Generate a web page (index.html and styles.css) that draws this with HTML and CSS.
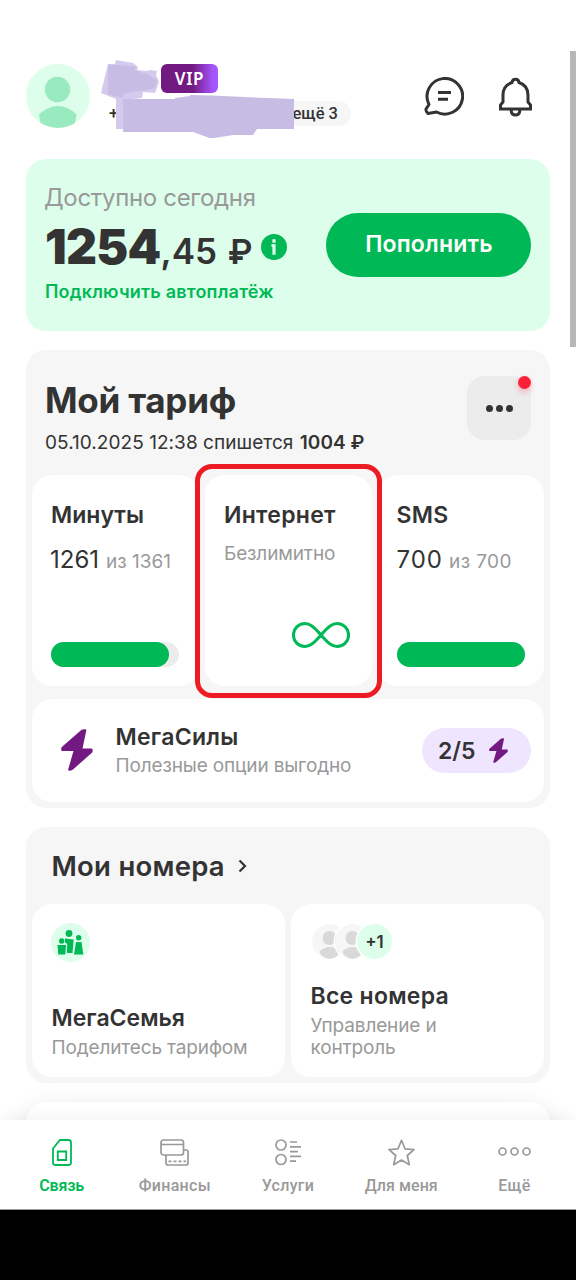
FILE: index.html
```
<!DOCTYPE html>
<html lang="ru">
<head>
<meta charset="utf-8">
<title>Мой тариф</title>
<link rel="stylesheet" href="styles.css">
</head>
<body>
<div class="screen">
  <main class="content">
    <header class="header">
      <svg class="avatar" width="64" height="64" viewBox="0 0 64 64"><clipPath id="av"><circle cx="32" cy="32" r="32"/></clipPath><circle cx="32" cy="32" r="32" fill="#dcfeea"/><g fill="#99eabf" clip-path="url(#av)"><circle cx="31.500" cy="25.500" r="12.700"/><path d="M13 50.500Q22 42 32 42T50.500 50.500L48 64H15.500Z"/></g></svg>
      <div class="profile">
        <span class="vip">VIP</span>
        <div class="phone-row"><span class="phone">+7</span><span class="more-chip">ещё 3</span></div>
        <svg class="scribble" width="196" height="80" viewBox="100 58 196 80"><path fill="#d3caed" d="M108 64H115L116 60 133 63 138 67 137 70 147 71 150 70 157 71 156 75 159 82 155 93 143 92 142 98 122 100 123 102H116V99L101 93Z"/><path fill="#c6bce4" d="M108 65H119L136 67 134 70 149 75 153 78 157 80 155 87 149 90 135 91 123 94 122 98 108 94Z"/><path fill="#d3caed" d="M116 99H124V129H116Z"/><path fill="#c6bce4" d="M123 99H175V98L190 96V95L212 95.500 268 98 294 99V129H257L253 135H233L211 138.500 193 132H123Z"/></svg>
      </div>
      <svg class="chat" width="40" height="40" viewBox="0 0 40 40" fill="none" stroke="#333" stroke-width="3"><path d="M4.800 27A17.800 17.800 0 1 1 12.500 35L4 36.500Q1.500 34.500 2 32L5 27.500Z" stroke-linejoin="round"/><path d="M14 15.500H27M14 22.300H24"/></svg>
      <svg class="bell" width="33" height="41" viewBox="0 0 33 41" fill="none" stroke="#333" stroke-width="3"><path d="M13 5.500Q13.500 2.300 16.500 2.300T20 5.500C26 7.500 29 12 29 18V25L31.500 28V32H1.500V28L4 25V18C4 12 7 7.500 13 5.500Z"/><path d="M12.300 32V34.500Q12.800 38 16.500 38T20.700 34.500V32"/></svg>
    </header>

    <section class="balance">
      <div>
        <div class="balance-label">Доступно сегодня</div>
        <div class="amount"><span class="rub">1254</span><span class="kop">,45</span><span class="cur">₽</span><svg width="26" height="26" viewBox="0 0 26 26"><circle cx="13" cy="13" r="13" fill="#00b956"/><path d="M13 5.300v3.400M10.500 11.500H13M13 10.300v10.500" stroke="#dcfeea" stroke-width="3.200"/></svg></div>
        <div class="autopay">Подключить автоплатёж</div>
      </div>
      <button class="topup">Пополнить</button>
    </section>

    <section class="panel tariff">
      <div class="tariff-head">
        <div>
          <h1>Мой тариф</h1>
          <p class="charge">05.10.2025 12:38 спишется <b>1004 ₽</b></p>
        </div>
        <div class="dots"><i></i><i></i><i></i><span class="alert"></span></div>
      </div>
      <div class="limits">
        <div class="card limit">
          <h2>Минуты</h2>
          <div class="value"><span class="left minutes">1261</span><span class="total">из 1361</span></div>
          <div class="bar"><div class="fill" style="width:92.300%"></div></div>
        </div>
        <div class="card limit">
          <h2 class="wide">Интернет</h2>
          <div class="unlimited">Безлимитно</div>
          <svg class="infinity" width="58" height="26" viewBox="0 0 58 26" fill="none" stroke="#00b956" stroke-width="3"><path d="M29 13C22 5 18 1.500 12.900 1.500a11.500 11.500 0 0 0 0 23C18 24.500 22 21 29 13S40 1.500 45.100 1.500a11.500 11.500 0 0 1 0 23C40 24.500 36 21 29 13Z"/></svg>
          <span class="highlight"></span>
        </div>
        <div class="card limit">
          <h2 class="wide">SMS</h2>
          <div class="value"><span class="left sms">700</span><span class="total spaced">из 700</span></div>
          <div class="bar"><div class="fill" style="width:100%"></div></div>
        </div>
      </div>
      <div class="card powers">
        <svg class="bolt" width="32" height="42" viewBox="0 0 32 42"><path fill="#731982" d="M24.500.300Q25.500.300 25.300 1.500L21.500 19.500H31Q32.200 21 31.200 23.500L12 40.500Q10.500 42 7.500 41.500 7 41 7.300 40L12.500 22H.800Q-.500 20.500.800 18L20 1.300Q21.500 0 24.500.300Z"/></svg>
        <div class="powers-text"><h2 class="wide">МегаСилы</h2><p>Полезные опции выгодно</p></div>
        <div class="counter">2/5<svg width="19" height="25" viewBox="0 0 32 42"><path fill="#731982" d="M24.500.300Q25.500.300 25.300 1.500L21.500 19.500H31Q32.200 21 31.200 23.500L12 40.500Q10.500 42 7.500 41.500 7 41 7.300 40L12.500 22H.800Q-.500 20.500.800 18L20 1.300Q21.500 0 24.500.300Z"/></svg></div>
      </div>
    </section>

    <section class="panel numbers">
      <div class="numbers-head"><h3>Мои номера</h3><svg width="9" height="14" viewBox="0 0 9 14" fill="none" stroke="#333" stroke-width="2.200"><path d="M1.500 1.500 7 7 1.500 12.500"/></svg></div>
      <div class="number-cards">
        <div class="card number">
          <svg class="family" width="39" height="39" viewBox="0 0 39 39"><circle cx="19.500" cy="19.500" r="19.500" fill="#dcfeea"/><g fill="#00b956"><circle cx="18" cy="10.500" r="3.400"/><circle cx="10.700" cy="18" r="2.700"/><circle cx="27.700" cy="14.700" r="2.700"/><path d="M14 15.500 22.700 16.500 21.500 30H15.800L16.300 21 14 19.500ZM6.500 22H15L14.300 31.500H7.300ZM25 19H30.500L32.300 31.500H23Z"/></g></svg>
          <h2>МегаСемья</h2>
          <p>Поделитесь тарифом</p>
        </div>
        <div class="card number">
          <div class="people">
            <svg width="35" height="35" viewBox="0 0 35 35"><circle cx="17.500" cy="17.500" r="17.500" fill="#f6f6f6"/><path fill="#d9d9d9" d="M7.500 27.500Q12 23 17.500 23T27.500 27.500Q27 33 17.500 35 9 33.500 7.500 27.500Z"/><circle cx="17.500" cy="14" r="7" fill="#d9d9d9"/></svg>
            <svg width="35" height="35" viewBox="0 0 35 35"><circle cx="17.500" cy="17.500" r="17.500" fill="#f6f6f6"/><path fill="#d9d9d9" d="M7.500 27.500Q12 23 17.500 23T27.500 27.500Q27 33 17.500 35 9 33.500 7.500 27.500Z"/><circle cx="17.500" cy="14" r="7" fill="#d9d9d9"/></svg>
            <span class="plus">+1</span>
          </div>
          <h2 class="wide">Все номера</h2>
          <p>Управление и<br>контроль</p>
        </div>
      </div>
    </section>

    <section class="next-card"></section>
    <span class="scrollbar"></span>
  </main>

  <nav class="nav">
    <a class="tab active"><svg width="20" height="27" viewBox="0 0 20 27" fill="none" stroke="#00b956" stroke-width="1.800"><path d="M8 1H16.500Q19 1 19 3.500V23.500Q19 26 16.500 26H3.500Q1 26 1 23.500V9.500Z"/><path d="M5.800 12.500H14.200V21H5.800Z"/></svg><span>Связь</span></a>
    <a class="tab"><svg width="29" height="27" viewBox="0 0 29 27" fill="none" stroke="#999" stroke-width="1.700"><rect x="1" y="1" width="22.500" height="15" rx="2.500"/><path d="M1 5.500H23.500M23.500 11H26Q28 11 28 13V24Q28 26 26 26H8Q6 26 6 24V16"/><path d="M8.500 22.300H26" stroke-dasharray="3 2"/></svg><span>Финансы</span></a>
    <a class="tab"><svg width="27" height="27" viewBox="0 0 27 27" fill="none" stroke="#999" stroke-width="1.700"><circle cx="6" cy="6" r="5"/><circle cx="6" cy="20.500" r="5"/><path d="M15 3H22M15 7.800H26M15 12.600H23M15 17.400H26M15 22.200H21"/></svg><span>Услуги</span></a>
    <a class="tab"><svg width="27" height="27" viewBox="0 0 27 27" fill="none" stroke="#999" stroke-width="1.700" stroke-linejoin="round"><path d="M13.500 1.200 17 9.800 26 10.600 19.300 16.500 21.300 25.700 13.500 21 5.700 25.700 7.700 16.500 1 10.600 10 9.800Z"/></svg><span>Для меня</span></a>
    <a class="tab"><svg width="33" height="27" viewBox="0 0 33 27" fill="none" stroke="#999" stroke-width="1.700"><circle cx="4.500" cy="12.500" r="3.500"/><circle cx="16.500" cy="12.500" r="3.500"/><circle cx="28.500" cy="12.500" r="3.500"/></svg><span>Ещё</span></a>
  </nav>
  <div class="system-bar"></div>
</div>
</body>
</html>
```
FILE: styles.css
```
* { box-sizing: border-box; }
body { margin: 0; background: #fff; font-family: Inter, "Noto Sans", sans-serif; color: #333; }
h1, h2, h3, p { margin: 0; }
svg { display: block; flex: none; }
.screen { width: 576px; height: 1280px; display: flex; flex-direction: column; overflow: hidden; }
.content { position: relative; height: 1120px; flex: none; padding: 64px 26px 0 26px; overflow: hidden; }

.header { display: flex; height: 94.500px; align-items: flex-start; }
.profile { position: relative; width: 334px; height: 64px; padding-left: 19px; }
.vip { display: block; width: 57px; height: 29px; margin-left: 52px; border-radius: 6px; background: linear-gradient(90deg, #731982 55%, #a656ff 92%); color: #fff; font: 600 17px/30px "Noto Sans", sans-serif; letter-spacing: .6px; text-align: center; }
.phone-row { display: flex; align-items: center; justify-content: space-between; width: 241.500px; height: 25px; margin-top: 8px; font: 500 16.500px/25px Roboto, sans-serif; }
.more-chip { width: 70px; height: 25px; padding-left: 12px; border-radius: 13px; background: #f6f6f6; white-space: nowrap; }
.scribble { position: absolute; left: 10px; top: -6px; }
.chat { margin-top: 12.500px; }
.bell { margin: 13px 0 0 34.500px; }

.balance { display: flex; justify-content: space-between; height: 172.500px; padding: 22px 19px 0 18px; border-radius: 20px; background: #dcfeea; }
.balance-label { height: 34px; font-size: 24px; line-height: 34px; letter-spacing: -.33px; color: #999; }
.amount { display: flex; align-items: baseline; height: 64px; line-height: 63px; white-space: nowrap; }
.rub { margin-left: 1px; font-size: 48px; font-weight: 900; letter-spacing: -.7px; }
.kop, .cur { font-size: 35px; font-weight: 600; letter-spacing: -.1px; }
.cur { margin-left: 11px; font-size: 34px; }
.amount svg { margin-left: 9px; align-self: center; }
.autopay { padding-left: 1px; font-size: 18px; font-weight: 600; line-height: 26px; letter-spacing: .2px; color: #00b956; }
.topup { width: 205px; height: 64px; margin-top: 32.500px; padding: 0 0 2px 1px; border: 0; border-radius: 32px; background: #00b956; color: #fff; font: 600 23px/62px Inter, sans-serif; letter-spacing: .19px; }

.panel { border-radius: 20px; background: #f6f6f6; }
.card { border-radius: 20px; background: #fff; }
.tariff { height: 457.500px; margin-top: 19px; padding: 0 6px; }
.tariff-head { display: flex; justify-content: space-between; height: 125px; padding: 26px 13px 0; }
h1 { font-size: 35px; line-height: 48px; letter-spacing: -.25px; }
.charge { font-size: 19px; line-height: 38px; letter-spacing: .05px; white-space: nowrap; }
.charge b { margin-left: 1px; font-weight: 600; letter-spacing: .05px; }
.dots { position: relative; display: flex; gap: 3px; align-items: center; justify-content: center; width: 64px; height: 64px; border-radius: 18px; background: #ececec; }
.dots i { width: 7px; height: 7px; border-radius: 50%; background: #333; }
.alert { position: absolute; right: 0; top: 0; width: 13px; height: 13px; border-radius: 50%; background: #fb2136; box-shadow: 0 3px 6px rgba(251, 33, 54, .3); }

.limits { display: grid; grid-template-columns: 167px 166.500px 166.500px; gap: 6px; }
.limit { position: relative; height: 211px; padding: 26.500px 19px 0; }
.limit:first-child { padding-right: 20px; }
h2 { font-size: 23px; font-weight: 600; line-height: 26px; white-space: nowrap; }
.wide { letter-spacing: .28px; }
.value { display: flex; align-items: baseline; height: 62px; line-height: 63px; white-space: nowrap; }
.left { font-size: 24px; }
.minutes { margin-left: -1px; }
.sms { letter-spacing: 1px; }
.total { margin-left: 7px; font-size: 19px; color: #999; }
.spaced { margin-left: 6px; letter-spacing: .4px; }
.bar { height: 25.500px; margin-top: 52px; border-radius: 13px; background: #ececec; }
.fill { height: 100%; border-radius: 13px; background: #00b956; }
.unlimited { margin-top: 12.500px; font-size: 19px; line-height: 27px; letter-spacing: -.13px; color: #999; }
.infinity { margin: 55px 0 0 auto; position: relative; right: 3px; }
.highlight { position: absolute; z-index: 2; left: -10px; top: -11px; width: 187px; height: 234px; border: 5px solid #ed1c24; border-radius: 17px; }

.powers { display: flex; height: 102.500px; margin-top: 13px; padding: 0 13px 0 29px; }
.bolt { margin-top: 30px; }
.powers-text { flex: 1; padding: 25px 0 0 22.500px; }
.powers p, .number p { font-size: 19px; color: #999; letter-spacing: -.14px; white-space: nowrap; }
.powers p { line-height: 32px; }
.counter { display: flex; align-items: center; gap: 13px; width: 109px; height: 45px; margin-top: 29px; padding-left: 16px; border-radius: 23px; background: #f0e5ff; font-size: 23px; font-weight: 600; }

.numbers { height: 256px; margin-top: 19px; padding: 0 6px; }
.numbers-head { display: flex; align-items: center; gap: 13px; height: 78px; margin-bottom: -1px; padding-left: 19.500px; }
h3 { font-size: 27.500px; font-weight: 600; line-height: 78px; letter-spacing: .25px; white-space: nowrap; }
.number-cards { display: grid; grid-template-columns: 1fr 1fr; gap: 6px; }
.number { display: flex; flex-direction: column; height: 173px; padding: 0 19px 17px 19.500px; }
.number h2 { margin-top: auto; line-height: 26px; }
.number p { padding-top: 6px; line-height: 22.500px; }
.family { margin: 19px 0 0 -.5px; }
.people { display: flex; align-items: center; margin: 20.500px 0 0 1.500px; }
.people > * { margin-right: -12.500px; border-radius: 50%; box-shadow: 0 0 0 1.500px #fff; }
.plus { width: 35px; height: 35px; background: #dcfeea; font-size: 17px; font-weight: 600; line-height: 36px; text-align: center; z-index: 1; }
.next-card { height: 100px; margin-top: 19px; border-radius: 20px; background: #fff; box-shadow: 0 8px 28px rgba(0, 0, 0, .12); }
.scrollbar { position: absolute; right: 0; top: 51px; width: 6.500px; height: 296px; background: #b8b8b8; }

.nav { position: relative; display: flex; flex: none; height: 90px; padding: 19px 5px 0; border-bottom: 1px solid #999; background: #fff; box-shadow: 0 -2px 18px rgba(0, 0, 0, .05); }
.tab { flex: 1; display: flex; flex-direction: column; align-items: center; color: #999; font: 500 16px/24px Roboto, sans-serif; letter-spacing: .3px; white-space: nowrap; }
.tab:nth-child(4) { letter-spacing: .05px; }
.tab span { margin-top: 7.500px; }
.tab.active { color: #00b956; font-weight: 600; letter-spacing: -.15px; }
.system-bar { flex: none; height: 70px; background: #000; }
```
